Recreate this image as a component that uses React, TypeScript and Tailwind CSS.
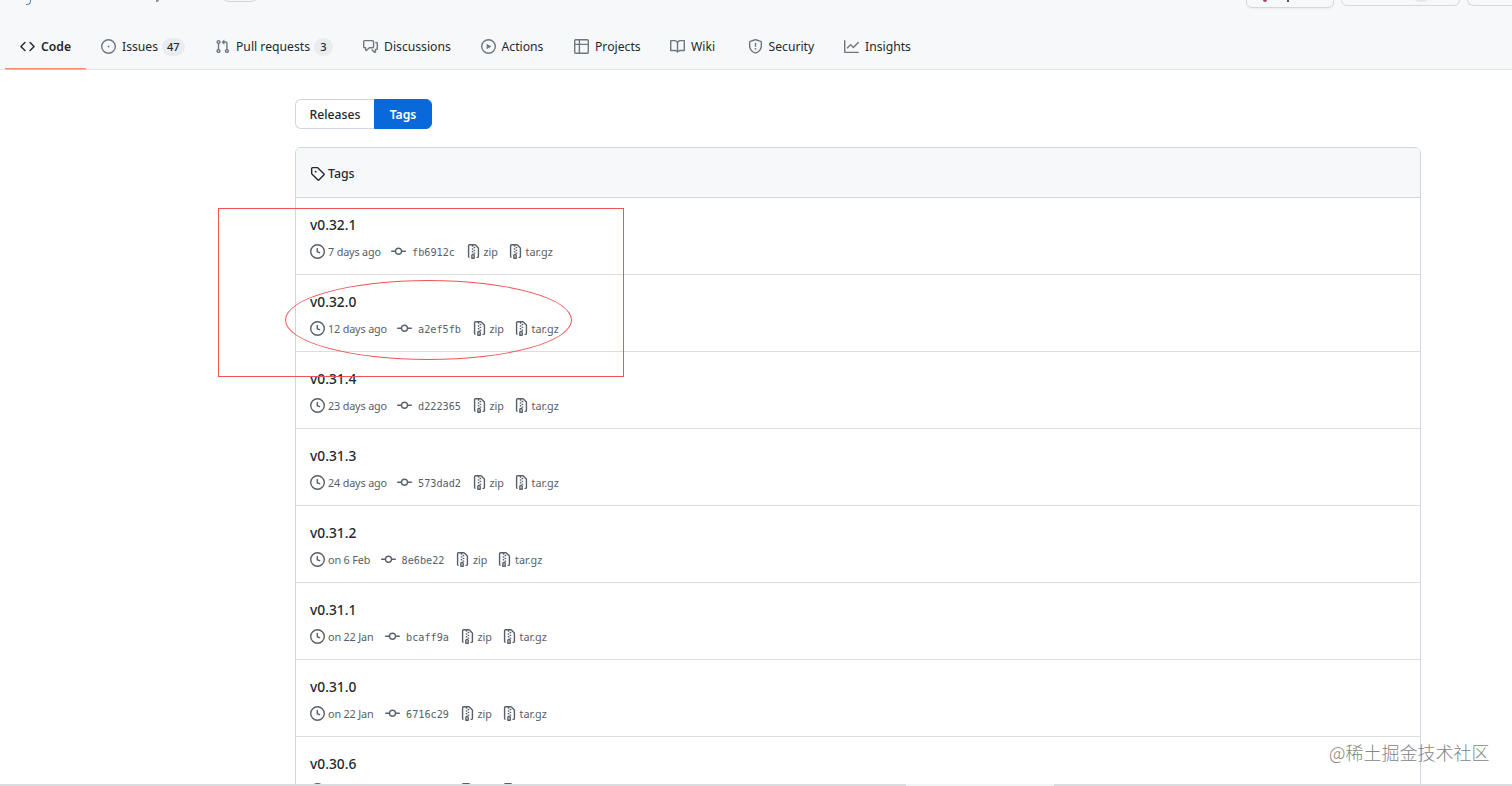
import type { ReactNode } from 'react';
import { clsx } from 'clsx';

const ICONS = {
  code: 'M4.72 3.22a.75.75 0 011.06 1.06L2.06 8l3.72 3.72a.75.75 0 11-1.06 1.06L.47 8.53a.75.75 0 010-1.06l4.25-4.25zm6.56 0a.75.75 0 10-1.06 1.06L13.94 8l-3.72 3.72a.75.75 0 101.06 1.06l4.25-4.25a.75.75 0 000-1.06l-4.25-4.25z',
  issue: 'M8 9a1 1 0 100-2 1 1 0 000 2zM8 0a8 8 0 100 16A8 8 0 008 0zM1.5 8a6.5 6.5 0 1113 0 6.5 6.5 0 01-13 0z',
  pull: 'M7.177 3.073L9.573.677A.25.25 0 0110 .854v4.792a.25.25 0 01-.427.177L7.177 3.427a.25.25 0 010-.354zM3.75 2.5a.75.75 0 100 1.5.75.75 0 000-1.5zm-2.25.75a2.25 2.25 0 113 2.122v5.256a2.251 2.251 0 11-1.5 0V5.372A2.25 2.25 0 011.5 3.25zM11 2.5h-1V4h1a1 1 0 011 1v5.628a2.251 2.251 0 101.5 0V5A2.5 2.5 0 0011 2.5zm1 10.25a.75.75 0 111.5 0 .75.75 0 01-1.5 0zM3.75 12a.75.75 0 100 1.5.75.75 0 000-1.5z',
  discussion: 'M1.5 2.75a.25.25 0 01.25-.25h8.5a.25.25 0 01.25.25v5.5a.25.25 0 01-.25.25h-3.5a.75.75 0 00-.53.22L3.5 11.44V9.25a.75.75 0 00-.75-.75h-1a.25.25 0 01-.25-.25v-5.5zM1.75 1A1.75 1.75 0 000 2.75v5.5C0 9.216.784 10 1.75 10H2v1.543a1.457 1.457 0 002.487 1.03L7.061 10h3.189A1.75 1.75 0 0012 8.25v-5.5A1.75 1.75 0 0010.25 1h-8.5zM14.5 4.75a.25.25 0 00-.25-.25h-.5a.75.75 0 110-1.5h.5c.966 0 1.75.784 1.75 1.75v5.5A1.75 1.75 0 0114.25 12H14v1.543a1.457 1.457 0 01-2.487 1.03L9.22 12.28a.75.75 0 111.06-1.06l2.22 2.22v-2.19a.75.75 0 01.75-.75h1a.25.25 0 00.25-.25v-5.5z',
  play: 'M1.5 8a6.5 6.5 0 1113 0 6.5 6.5 0 01-13 0zM8 0a8 8 0 100 16A8 8 0 008 0zM6.379 5.227A.25.25 0 006 5.442v5.117a.25.25 0 00.379.214l4.264-2.559a.25.25 0 000-.428L6.379 5.227z',
  table: 'M0 1.75C0 .784.784 0 1.75 0h12.5C15.216 0 16 .784 16 1.75v12.5A1.75 1.75 0 0114.25 16H1.75A1.75 1.75 0 010 14.25V1.75zM1.5 6.5v7.75c0 .138.112.25.25.25H5v-8H1.5zM5 5H1.5V1.75a.25.25 0 01.25-.25H5V5zm1.5 1.5v8h7.75a.25.25 0 00.25-.25V6.5h-8zm8-1.5h-8V1.5h7.75a.25.25 0 01.25.25V5z',
  book: 'M0 1.75A.75.75 0 01.75 1h4.253c1.227 0 2.317.59 3 1.501A3.744 3.744 0 0111.006 1h4.245a.75.75 0 01.75.75v10.5a.75.75 0 01-.75.75h-4.507a2.25 2.25 0 00-1.591.659l-.622.621a.75.75 0 01-1.06 0l-.622-.621A2.25 2.25 0 005.258 13H.75a.75.75 0 01-.75-.75V1.75zm8.755 3a2.25 2.25 0 012.25-2.25H14.5v9h-3.757c-.71 0-1.4.201-1.992.572l.004-7.322zm-1.504 7.324l.004-5.073-.002-2.253A2.25 2.25 0 005.003 2.5H1.5v9h3.757a3.75 3.75 0 011.994.574z',
  shield: 'M7.467.133a1.75 1.75 0 011.066 0l5.25 1.68A1.75 1.75 0 0115 3.48V7c0 1.566-.32 3.182-1.303 4.682-.983 1.498-2.585 2.813-5.032 3.855a1.7 1.7 0 01-1.33 0c-2.447-1.042-4.049-2.357-5.032-3.855C1.32 10.182 1 8.566 1 7V3.48a1.75 1.75 0 011.217-1.667l5.25-1.68zm.61 1.429a.25.25 0 00-.153 0l-5.25 1.68a.25.25 0 00-.174.238V7c0 1.358.275 2.666 1.057 3.86.784 1.194 2.121 2.34 4.366 3.297a.2.2 0 00.154 0c2.245-.956 3.582-2.104 4.366-3.298C13.225 9.666 13.5 8.36 13.5 7V3.48a.25.25 0 00-.174-.237l-5.25-1.68zM9 10.5a1 1 0 11-2 0 1 1 0 012 0zm-.25-5.75a.75.75 0 10-1.5 0v3a.75.75 0 001.5 0v-3z',
  graph: 'M1.5 1.75a.75.75 0 00-1.5 0v12.5c0 .414.336.75.75.75h14.5a.75.75 0 000-1.5H1.5V1.75zm14.28 2.53a.75.75 0 00-1.06-1.06L10 7.94 7.53 5.47a.75.75 0 00-1.06 0L3.22 8.72a.75.75 0 001.06 1.06L7 7.06l2.47 2.47a.75.75 0 001.06 0l5.25-5.25z',
  tag: 'M2.5 7.775V2.75a.25.25 0 01.25-.25h5.025a.25.25 0 01.177.073l6.25 6.25a.25.25 0 010 .354l-5.025 5.025a.25.25 0 01-.354 0l-6.25-6.25a.25.25 0 01-.073-.177zm-1.5 0V2.75C1 1.784 1.784 1 2.75 1h5.025c.464 0 .91.184 1.238.513l6.25 6.25a1.75 1.75 0 010 2.474l-5.026 5.026a1.75 1.75 0 01-2.474 0l-6.25-6.25A1.75 1.75 0 011 7.775zM6 5a1 1 0 100 2 1 1 0 000-2z',
  clock: 'M1.5 8a6.5 6.5 0 1113 0 6.5 6.5 0 01-13 0zM8 0a8 8 0 100 16A8 8 0 008 0zm.5 4.75a.75.75 0 00-1.5 0v3.5a.75.75 0 00.471.696l2.5 1a.75.75 0 00.557-1.392L8.5 7.742V4.75z',
  commit: 'M10.5 7.75a2.5 2.5 0 11-5 0 2.5 2.5 0 015 0zm1.43.75a4.002 4.002 0 01-7.86 0H.75a.75.75 0 110-1.5h3.32a4.001 4.001 0 017.86 0h3.32a.75.75 0 110 1.5h-3.32z',
  zip: 'M3.5 1.75a.25.25 0 01.25-.25h3a.75.75 0 000 1.5h.5a.75.75 0 000-1.5h2.086a.25.25 0 01.177.073l2.914 2.914a.25.25 0 01.073.177v8.586a.25.25 0 01-.25.25h-.5a.75.75 0 000 1.5h.5A1.75 1.75 0 0014 13.25V4.664c0-.464-.184-.909-.513-1.237L10.573.513A1.75 1.75 0 009.336 0H3.75A1.75 1.75 0 002 1.75v11.5c0 .649.353 1.214.874 1.515a.75.75 0 10.752-1.298.25.25 0 01-.126-.217V1.75zM8.75 3a.75.75 0 000 1.5h.5a.75.75 0 000-1.5h-.5zM6 5.25a.75.75 0 01.75-.75h.5a.75.75 0 010 1.5h-.5A.75.75 0 016 5.25zm2 1.5A.75.75 0 018.75 6h.5a.75.75 0 010 1.5h-.5A.75.75 0 018 6.75zm-1.25.75a.75.75 0 000 1.5h.5a.75.75 0 000-1.5h-.5zM8 9.75A.75.75 0 018.75 9h.5a.75.75 0 010 1.5h-.5A.75.75 0 018 9.75zm-.75.75a1.75 1.75 0 00-1.75 1.75v3c0 .414.336.75.75.75h2.5a.75.75 0 00.75-.75v-3a1.75 1.75 0 00-1.75-1.75h-.5zM7 12.25a.25.25 0 01.25-.25h.5a.25.25 0 01.25.25v2.25H7v-2.25z',
};

type IconName = keyof typeof ICONS;

function Icon({ name, className }: { name: IconName; className?: string }) {
  return (
    <svg viewBox="0 0 16 16" fill="currentColor" fillRule="evenodd" className={clsx('size-[15px] shrink-0', className)}>
      <path d={ICONS[name]} />
    </svg>
  );
}

interface NavItem {
  icon: IconName;
  label: string;
  width: string;
  count?: number;
  active?: boolean;
}

const NAV_ITEMS: NavItem[] = [
  { icon: 'code',       label: 'Code',          width: 'w-[81px]', active: true },
  { icon: 'issue',      label: 'Issues',        width: 'w-[114px]', count: 47 },
  { icon: 'pull',       label: 'Pull requests', width: 'w-[148px]', count: 3 },
  { icon: 'discussion', label: 'Discussions',   width: 'w-[117.5px]' },
  { icon: 'play',       label: 'Actions',       width: 'w-[93.5px]' },
  { icon: 'table',      label: 'Projects',      width: 'w-[96px]' },
  { icon: 'book',       label: 'Wiki',          width: 'w-[77.5px]' },
  { icon: 'shield',     label: 'Security',      width: 'w-[96.5px]' },
  { icon: 'graph',      label: 'Insights',      width: 'w-[96px]' },
];

interface Tag {
  name: string;
  width: string;
  date?: string;
  sha?: string;
}

const TAGS: Tag[] = [
  { name: 'v0.32.1', date: '7 days ago',  sha: 'fb6912c', width: 'w-[81px]' },
  { name: 'v0.32.0', date: '12 days ago', sha: 'a2ef5fb', width: 'w-[87px]' },
  { name: 'v0.31.4', date: '23 days ago', sha: 'd222365', width: 'w-[87px]' },
  { name: 'v0.31.3', date: '24 days ago', sha: '573dad2', width: 'w-[87px]' },
  { name: 'v0.31.2', date: 'on 6 Feb',    sha: '8e6be22', width: 'w-[70.5px]' },
  { name: 'v0.31.1', date: 'on 22 Jan',   sha: 'bcaff9a', width: 'w-[75px]' },
  { name: 'v0.31.0', date: 'on 22 Jan',   sha: '6716c29', width: 'w-[75px]' },
  { name: 'v0.30.6', width: 'w-[75px]' },
];

function RepoHeader() {
  return (
    <header className="h-[70px] bg-[#f6f8fa] border-b border-[#e1e4e8] flex flex-col">
      {/* Bottom edge of the repository title row */}
      <div className="h-6 flex items-start overflow-hidden">
        <div className="ml-[26px] w-[195px] flex items-start">
          <span className="w-[5px] h-[5px] rounded-br-[4px] border-b-[1.5px] border-r-[1.5px] border-[#4a86d4]" />
          <span className="ml-[125px] w-[3px] h-[2px] rounded-br-[2px] bg-[#8b939c]" />
        </div>
        <div className="w-[38px] h-4 -mt-[14px] rounded-full border border-[#cfd4da]" />
        <div className="ml-auto flex items-start">
          <div className="relative w-[88px] h-6 -mt-4 rounded-md border border-[#d5d8dc] shadow-xs">
            <span className="absolute left-4 top-[13px] size-1 rounded-full bg-[#a8465c]" />
            <span className="absolute left-[40px] top-3 w-0.5 h-[5px] bg-[#4b5563]" />
          </div>
          <div className="ml-[7px] w-[119px] h-6 -mt-[18px] rounded-md border border-[#d5d8dc] flex">
            <span className="ml-[69px] mt-[1px] w-5 h-[18px] rounded-full bg-[#e5e7ea]" />
          </div>
          <div className="ml-[7px] w-[45px] h-6 -mt-[18px] rounded-l-md border border-r-0 border-[#d5d8dc]" />
        </div>
      </div>

      {/* Repository tabs */}
      <nav className="flex h-[46px] pl-[5px]">
        {NAV_ITEMS.map(item => (
          <a
            key={item.label}
            className={clsx(
              'relative flex shrink-0 items-center h-[45px] pl-[15px] text-[12.2px] whitespace-nowrap text-[#24292f]',
              item.width,
              item.active && 'font-semibold'
            )}
          >
            <Icon name={item.icon} className={item.active ? 'text-[#24292f]' : 'text-[#6e7781]'} />
            <span className="ml-[6px] mt-[2px]">{item.label}</span>
            {item.count !== undefined && (
              <span className="ml-[4px] mt-px h-[18px] min-w-[19px] px-[5px] rounded-full bg-[#eaedf0] text-[11px] font-medium leading-[18px] text-center">
                {item.count}
              </span>
            )}
            {item.active && <span className="absolute left-0 right-0 bottom-0 h-px bg-[#fd8c73] shadow-[0_0.5px_0_#fd8c73]" />}
          </a>
        ))}
      </nav>
    </header>
  );
}

function Meta({ icon, width, children }: { icon: IconName; width?: string; children?: ReactNode }) {
  return (
    <span className={clsx('flex shrink-0 items-center whitespace-nowrap', width)}>
      <Icon name={icon} />
      {children}
    </span>
  );
}

function TagRow({ tag }: { tag: Tag }) {
  return (
    <div className="h-[77px] shrink-0 border-b border-[#d8dee4] pl-[14px] pt-[17px]">
      <h4 className="text-[13.8px] font-medium leading-5 text-[#24292f]">{tag.name}</h4>
      <div className="mt-[8px] flex h-4 items-center text-[10.8px] text-[#57606a]">
        <Meta icon="clock" width={tag.width}>
          {tag.date && <span className="ml-[3px] mt-[2px] tracking-[-0.15px]">{tag.date}</span>}
        </Meta>
        <Meta icon="commit" width="w-[74.5px]">
          {tag.sha && (
            <span className="ml-[6px] mt-[3px] font-['DejaVu_Sans_Mono',monospace] text-[10.2px]">{tag.sha}</span>
          )}
        </Meta>
        <Meta icon="zip" width="w-[42px]">
          {tag.sha && <span className="ml-[3px] mt-[2px]">zip</span>}
        </Meta>
        <Meta icon="zip">
          {tag.sha && <span className="ml-[3px] mt-[2px]">tar.gz</span>}
        </Meta>
      </div>
    </div>
  );
}

export default function App() {
  return (
    <div className="relative w-[1512px] h-[786px] flex flex-col overflow-hidden bg-white font-['Noto_Sans','Noto_Sans_CJK_SC',sans-serif]">
      <RepoHeader />

      <main className="ml-[295px] w-[1126px] min-h-0 flex-1 pt-[29px] flex flex-col overflow-hidden">
        <div className="flex h-[30px] shrink-0 text-[12.2px] font-medium">
          <button className="w-[79px] pt-[2px] rounded-l-md border border-r-0 border-[#d0d7de] text-[#24292f]">Releases</button>
          <button className="w-[58px] pt-[2px] rounded-r-md border border-[#0969da] bg-[#0969da] font-semibold text-white">Tags</button>
        </div>

        <section className="mt-[18px] flex shrink-0 flex-col overflow-hidden rounded-t-md border border-[#d0d7de]">
          <div className="flex h-[50px] shrink-0 items-center border-b border-[#d0d7de] bg-[#f6f8fa] pl-[14px] pt-[2px] text-[#24292f]">
            <Icon name="tag" />
            <span className="ml-[3px] mt-px text-[12.3px] font-medium">Tags</span>
          </div>
          {TAGS.map(tag => <TagRow key={tag.name} tag={tag} />)}
        </section>
      </main>

      <footer className="flex h-0.5 shrink-0 bg-[#dadcdf]">
        <div className="ml-[906px] w-[148px] bg-[#f3f4f5]" />
      </footer>

      {/* Red annotations drawn over the list */}
      <div className="absolute left-[218px] top-[208px] w-[405.5px] h-[169px] border border-[#ee5656]" />
      <div className="absolute left-[285px] top-[280px] w-[287px] h-[80px] rounded-[50%] border border-[#ee5656]" />

      <div className="absolute left-[1329px] top-[740px] text-[18px] leading-6 whitespace-nowrap text-[#858585] font-['Noto_Sans_CJK_SC',sans-serif] font-light">
        @稀土掘金技术社区
      </div>
    </div>
  );
}
